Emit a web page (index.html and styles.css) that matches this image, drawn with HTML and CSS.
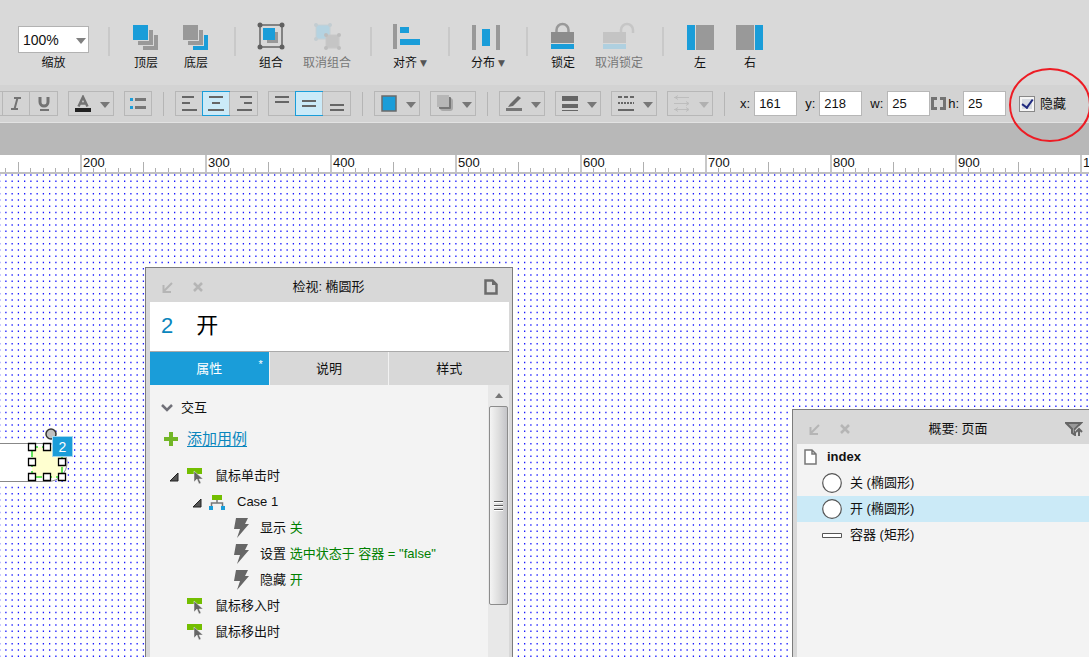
FILE: index.html
```html
<!DOCTYPE html>
<html lang="zh-CN">
<head>
<meta charset="utf-8">
<title>index</title>
<link rel="stylesheet" href="styles.css">
</head>
<body>
<div class="app">
  <header class="main-bar">
    <div class="zoom-group">
      <div class="select-wrap">
        <select id="zoom" class="zoom-select"><option>100%</option></select>
        <svg class="zoom-arrow" width="10" height="6" viewBox="0 0 10 6"><path d="M0 0h10L5 6z" fill="#808080"/></svg>
      </div>
      <label class="tool-label" for="zoom">缩放</label>
    </div>
    <i class="divider"></i>
    <div class="tool-group">
      <button class="tool"><svg width="28" height="27" viewBox="0 0 28 27"><path d="M6 21v-4h11V6h4v15zM11 26v-4h11V11h4v15z" fill="#999"/><path d="M1 1h15v15H1z" fill="#1a9dd9"/></svg><span>顶层</span></button>
      <button class="tool"><svg width="28" height="27" viewBox="0 0 28 27"><path d="M6 21v-4h11V6h4v15z" fill="#999"/><path d="M11 26v-4h11V11h4v15z" fill="#1a9dd9"/><path d="M1 1h15v15H1z" fill="#999"/></svg><span>底层</span></button>
    </div>
    <i class="divider"></i>
    <div class="tool-group wide">
      <button class="tool"><svg width="28" height="28" viewBox="0 0 28 28"><path d="M3 3h22v22H3z" fill="none" stroke="#666" stroke-width="1.500"/><path d="M10 10h11v11H10z" fill="#999"/><path d="M6 6h12v12H6z" fill="#1a9dd9"/><g fill="#606060"><circle cx="3" cy="3" r="2.500"/><circle cx="25" cy="3" r="2.500"/><circle cx="3" cy="25" r="2.500"/><circle cx="25" cy="25" r="2.500"/></g></svg><span>组合</span></button>
      <button class="tool" disabled><svg width="28" height="28" viewBox="0 0 28 28"><path d="M3 3h14v14H3z" fill="#b5d3e1" stroke="#c6d0d4"/><path d="M13 13h13v13H13z" fill="#c5c5c5" stroke="#c8c8c8"/><g fill="#c3cdd1"><circle cx="3" cy="3" r="2"/><circle cx="17" cy="3" r="2"/><circle cx="3" cy="17" r="2"/></g><g fill="#bdbdbd"><circle cx="13" cy="13" r="2"/><circle cx="26" cy="13" r="2"/><circle cx="13" cy="26" r="2"/><circle cx="26" cy="26" r="2"/></g></svg><span>取消组合</span></button>
    </div>
    <i class="divider"></i>
    <div class="tool-group single">
      <button class="tool"><svg width="34" height="28" viewBox="0 0 34 28"><path d="M0 1h4v25H0z" fill="#999"/><path d="M7 4h9v6H7zM7 16h20v6H7z" fill="#1a9dd9"/></svg><span>对齐<b class="caret">▼</b></span></button>
    </div>
    <i class="divider"></i>
    <div class="tool-group single">
      <button class="tool"><svg width="32" height="28" viewBox="0 0 32 28"><path d="M0 2h4v25H0zM24 2h4v25h-4z" fill="#999"/><path d="M10 6h8v17h-8z" fill="#1a9dd9"/></svg><span>分布<b class="caret">▼</b></span></button>
    </div>
    <i class="divider"></i>
    <div class="tool-group wide">
      <button class="tool"><svg width="26" height="28" viewBox="0 0 26 28"><path d="M6.500 11V8a6 6 0 0 1 12 0v3" fill="none" stroke="#999" stroke-width="2.500"/><path d="M1 10h23v11H1z" fill="#8c8c8c"/><path d="M1 22h23v5H1z" fill="#1a9dd9"/></svg><span>锁定</span></button>
      <button class="tool" disabled><svg width="32" height="28" viewBox="0 0 32 28"><path d="M18 11V8a6 6 0 0 1 12 0v3" fill="none" stroke="#c6c6c6" stroke-width="2.500"/><path d="M0 10h23v11H0z" fill="#c4c4c4"/><path d="M0 22h23v5H0z" fill="#afd0e0"/></svg><span>取消锁定</span></button>
    </div>
    <i class="divider"></i>
    <div class="tool-group">
      <button class="tool"><svg width="28" height="27" viewBox="0 0 28 27"><path d="M1 1h8v25H1z" fill="#1a9dd9"/><path d="M10 1h18v25H10z" fill="#999"/></svg><span>左</span></button>
      <button class="tool"><svg width="28" height="27" viewBox="0 0 28 27"><path d="M0 1h18v25H0z" fill="#999"/><path d="M19 1h8v25h-8z" fill="#1a9dd9"/></svg><span>右</span></button>
    </div>
  </header>

  <div class="format-bar">
    <div class="segment text-style">
      <button aria-label="粗体"></button>
      <button aria-label="斜体"><svg width="16" height="17" viewBox="0 0 16 17"><path d="M6 3h7M3 14h7M9.500 3L6.500 14" fill="none" stroke="#737373" stroke-width="2"/></svg></button>
      <button aria-label="下划线"><svg width="16" height="17" viewBox="0 0 16 17"><path d="M4 2v5a4 4 0 0 0 8 0V2" fill="none" stroke="#737373" stroke-width="3"/><path d="M4 14h9v2H4z" fill="#737373"/></svg></button>
    </div>
    <button class="drop" aria-label="文字颜色"><svg width="16" height="17" viewBox="0 0 16 17"><path d="M3.500 11.500L8 2l4.500 9.500M5 8.500h6" fill="none" stroke="#737373" stroke-width="2.500"/><path d="M0 13h16v4H0z" fill="#222"/></svg><svg class="arrow" viewBox="0 0 10 6"><path d="M0 0h10L5 6z"/></svg></button>
    <button class="square" aria-label="项目符号"><svg width="16" height="11" viewBox="0 0 16 11"><path d="M0 0h3v3H0zM0 8h3v3H0z" fill="#1a9dd9"/><path d="M5 0h11v3H5zM5 8h11v3H5z" fill="#777"/></svg></button>
    <i class="bar-line"></i>
    <div class="segment">
      <button aria-label="左对齐"><svg width="16" height="17" viewBox="0 0 16 17"><path d="M1 1h12v2H1zM1 7h8v2H1zM1 14h15v2H1z" fill="#666"/></svg></button>
      <button aria-label="居中" aria-pressed="true"><svg width="16" height="17" viewBox="0 0 16 17"><path d="M1 1h14v2H1zM4 7h8v2H4zM0 14h16v2H0z" fill="#666"/></svg></button>
      <button aria-label="右对齐"><svg width="16" height="17" viewBox="0 0 16 17"><path d="M4 1h12v2H4zM8 7h8v2H8zM1 14h15v2H1z" fill="#666"/></svg></button>
    </div>
    <div class="segment">
      <button aria-label="顶部对齐"><svg width="14" height="17" viewBox="0 0 14 17"><path d="M0 1h14v2H0zM0 6h14v2H0z" fill="#666"/></svg></button>
      <button aria-label="中部对齐" aria-pressed="true"><svg width="14" height="17" viewBox="0 0 14 17"><path d="M0 5h14v2H0zM0 10h14v2H0z" fill="#666"/></svg></button>
      <button aria-label="底部对齐"><svg width="14" height="17" viewBox="0 0 14 17"><path d="M0 9h14v2H0zM0 14h14v2H0z" fill="#666"/></svg></button>
    </div>
    <i class="bar-line"></i>
    <button class="drop" aria-label="填充"><svg width="16" height="17" viewBox="0 0 16 17"><path d="M1 1h14v15H1z" fill="#1a9dd9" stroke="#6b6b6b" stroke-width="1.500"/></svg><svg class="arrow" viewBox="0 0 10 6"><path d="M0 0h10L5 6z"/></svg></button>
    <button class="drop" aria-label="阴影"><svg width="16" height="17" viewBox="0 0 16 17"><rect x="3" y="3" width="13" height="13" rx="3" fill="#aaa"/><rect x="2" y="2" width="12" height="12" rx="1" fill="#777"/><path d="M0 0h12v12H0z" fill="#b7b7b7"/></svg><svg class="arrow" viewBox="0 0 10 6"><path d="M0 0h10L5 6z"/></svg></button>
    <i class="bar-line"></i>
    <button class="drop" aria-label="线条颜色"><svg width="16" height="17" viewBox="0 0 16 17"><path d="M4 9l8-8 3 2-8 8-5 1z" fill="#6b6b6b"/><path d="M0 13h16v3H0z" fill="#777"/></svg><svg class="arrow" viewBox="0 0 10 6"><path d="M0 0h10L5 6z"/></svg></button>
    <button class="drop" aria-label="线宽"><svg width="16" height="17" viewBox="0 0 16 17"><path d="M0 1h16v5H0zM0 9h16v4H0zM0 15h16v1H0z" fill="#666"/></svg><svg class="arrow" viewBox="0 0 10 6"><path d="M0 0h10L5 6z"/></svg></button>
    <button class="drop" aria-label="线型"><svg width="16" height="17" viewBox="0 0 16 17"><path d="M0 2h16" stroke="#666" stroke-width="2" stroke-dasharray="4 2"/><path d="M0 8h16" stroke="#666" stroke-width="2" stroke-dasharray="2 1"/><path d="M0 15h16" stroke="#666" stroke-width="2"/></svg><svg class="arrow" viewBox="0 0 10 6"><path d="M0 0h10L5 6z"/></svg></button>
    <button class="drop" aria-label="箭头样式" disabled><svg width="16" height="17" viewBox="0 0 16 17"><path d="M0 2.500h15M0 8.500h15M0 14.500h15M4 .5l-3 2 3 2M12 6.500l3 2-3 2M4 12.500l-3 2 3 2M12 12.500l3 2-3 2" fill="none" stroke="#bdbdbd"/></svg><svg class="arrow" viewBox="0 0 10 6"><path d="M0 0h10L5 6z"/></svg></button>
    <i class="bar-line"></i>
    <div class="fields">
      <label class="field" for="fx">x:<input id="fx" value="161"></label>
      <label class="field" for="fy">y:<input id="fy" value="218"></label>
      <label class="field" for="fw">w:<input id="fw" value="25"></label>
      <div class="height-field">
        <svg width="15" height="13" viewBox="0 0 15 13"><path d="M6 1.500H1.500v10H6M9 1.500h4.500v10H9" fill="none" stroke="#737373" stroke-width="3"/></svg>
        <label class="field" for="fh">h:<input id="fh" value="25"></label>
      </div>
      <div class="hide-option">
        <input id="hide" type="checkbox" checked>
        <label for="hide">隐藏</label>
        <svg class="marker" width="84" height="76" viewBox="0 0 84 76"><ellipse cx="42" cy="38" rx="40" ry="36" fill="none" stroke="#ed1c24" stroke-width="2"/></svg>
      </div>
    </div>
  </div>

  <div class="tab-strip"></div>

  <div class="ruler">
    <svg class="ticks" width="100%" height="19"><defs><pattern id="tick" x="80" y="0" width="125" height="19" patternUnits="userSpaceOnUse"><path d="M0 0h2v19H0z" fill="#c8c8c8"/><path d="M63 7h1v12h-1zM13 13h1v6h-1zM25 13h1v6h-1zM38 13h1v6h-1zM50 13h1v6h-1zM75 13h1v6h-1zM88 13h1v6h-1zM100 13h1v6h-1zM113 13h1v6h-1z" fill="#b0b0b0"/></pattern></defs><rect width="100%" height="19" fill="url(#tick)"/></svg>
    <div class="numbers"><span>200</span><span>300</span><span>400</span><span>500</span><span>600</span><span>700</span><span>800</span><span>900</span><span>1000</span></div>
  </div>

  <main class="canvas">
    <svg class="dots" width="100%" height="100%"><defs>
      <pattern id="dot" x="-1" y="-6" width="25" height="25" patternUnits="userSpaceOnUse"><g fill="none" stroke="#1a1aff" stroke-width="1.300" stroke-dasharray="1.300 4.950">
        <path d="M0 .75h25M0 7h25M0 13.250h25M0 19.500h25"/></g></pattern></defs>
      <rect width="100%" height="100%" fill="url(#dot)"/></svg>

    <div class="widget">
      <svg width="76" height="60" viewBox="0 0 76 60">
        <path d="M0 16.500h48a19 19 0 0 1 0 38H0" fill="#fff" stroke="#888"/>
        <path d="M32 20h30c6 10 4 22-4 31H32z" fill="#ffffd0"/>
        <path d="M32 20h30v30H32z" fill="none" stroke="#33dd33" stroke-width="1.500" stroke-dasharray="6 4"/>
        <circle cx="51" cy="7" r="5" fill="#c0c0c0" stroke="#333" stroke-width="1.500"/>
        <g fill="#fff" stroke="#000" stroke-width="1.300"><path d="M28.500 16.500h7v7h-7zM43.500 16.500h7v7h-7zM28.500 31.500h7v7h-7zM58.500 31.500h7v7h-7zM28.500 46.500h7v7h-7zM43.500 46.500h7v7h-7zM58.500 46.500h7v7h-7z"/></g>
      </svg>
      <span class="badge">2</span>
    </div>

    <section class="panel inspector">
      <div class="panel-head">
        <svg width="11" height="11" viewBox="0 0 11 11"><path d="M10 1L2 9M1.500 3v7H9" fill="none" stroke="#b5b5b5" stroke-width="2"/></svg>
        <svg width="10" height="10" viewBox="0 0 10 10"><path d="M1 1l8 8M9 1L1 9" fill="none" stroke="#b5b5b5" stroke-width="2.500"/></svg>
        <h2>检视: 椭圆形</h2>
        <svg class="head-end" width="14" height="16" viewBox="0 0 14 16"><path d="M1.500 1.500h7l4 4v9h-11z" fill="none" stroke="#6b6b6b" stroke-width="2.500"/><path d="M8 1v5h5z" fill="#6b6b6b"/></svg>
      </div>
      <div class="name-row"><span class="number">2</span><span>开</span></div>
      <div class="tabs">
        <button class="active">属性<sup>*</sup></button><button>说明</button><button>样式</button>
      </div>
      <div class="panel-body">
        <div class="content">
          <div class="section"><svg width="12" height="8" viewBox="0 0 12 8"><path d="M1 1l5 5 5-5" fill="none" stroke="#707078" stroke-width="2.500"/></svg>交互</div>
          <div class="add"><svg width="14" height="14" viewBox="0 0 14 14"><path d="M7 0v14M0 7h14" stroke="#72b626" stroke-width="4"/></svg><a href="#add">添加用例</a></div>
          <ul class="tree">
            <li class="event"><svg class="open" width="10" height="10" viewBox="0 0 10 10"><path d="M9 1v8H1z" fill="#555" stroke="#222"/></svg><svg width="17" height="16" viewBox="0 0 17 16"><path d="M0 0h15v6H0z" fill="#73be00"/><path d="M7 3v11l3-3 2 5 2-1-2-4h4z" fill="#666" stroke="#f3f3f3" stroke-width=".5"/></svg><span>鼠标单击时</span></li>
            <li class="case"><svg class="open" width="10" height="10" viewBox="0 0 10 10"><path d="M9 1v8H1z" fill="#555" stroke="#222"/></svg><svg width="16" height="15" viewBox="0 0 16 15"><path d="M3 0h10v5H3z" fill="#73be00"/><path d="M8 5v3M2.500 12V8h11v4" fill="none" stroke="#777" stroke-width="1.500"/><path d="M0 11h4v4H0zM12 11h4v4h-4z" fill="#1a9dd9"/></svg><span>Case 1</span></li>
            <li class="action"><svg width="16" height="20" viewBox="0 0 16 20"><path d="M2 0h12l-3 6h4L3 20l3-9H0z" fill="#666"/></svg><span>显示 <em>关</em></span></li>
            <li class="action"><svg width="16" height="20" viewBox="0 0 16 20"><path d="M2 0h12l-3 6h4L3 20l3-9H0z" fill="#666"/></svg><span>设置 <em>选中状态于 容器 = "false"</em></span></li>
            <li class="action"><svg width="16" height="20" viewBox="0 0 16 20"><path d="M2 0h12l-3 6h4L3 20l3-9H0z" fill="#666"/></svg><span>隐藏 <em>开</em></span></li>
            <li class="event closed"><svg width="17" height="16" viewBox="0 0 17 16"><path d="M0 0h15v6H0z" fill="#73be00"/><path d="M7 3v11l3-3 2 5 2-1-2-4h4z" fill="#666" stroke="#f3f3f3" stroke-width=".5"/></svg><span>鼠标移入时</span></li>
            <li class="event closed"><svg width="17" height="16" viewBox="0 0 17 16"><path d="M0 0h15v6H0z" fill="#73be00"/><path d="M7 3v11l3-3 2 5 2-1-2-4h4z" fill="#666" stroke="#f3f3f3" stroke-width=".5"/></svg><span>鼠标移出时</span></li>
          </ul>
        </div>
        <div class="scroll">
          <svg width="8" height="5" viewBox="0 0 8 5"><path d="M0 5l4-5 4 5z" fill="#777"/></svg>
          <div class="thumb"><svg width="9" height="11" viewBox="0 0 9 11"><path d="M0 1.500h9M0 5.500h9M0 9.500h9" stroke="#555"/><path d="M0 2.500h9M0 6.500h9M0 10.500h9" stroke="#fff"/></svg></div>
        </div>
      </div>
    </section>

    <section class="panel outline">
      <div class="panel-head">
        <svg width="11" height="11" viewBox="0 0 11 11"><path d="M10 1L2 9M1.500 3v7H9" fill="none" stroke="#b5b5b5" stroke-width="2"/></svg>
        <svg width="10" height="10" viewBox="0 0 10 10"><path d="M1 1l8 8M9 1L1 9" fill="none" stroke="#b5b5b5" stroke-width="2.500"/></svg>
        <h2>概要: 页面</h2>
        <svg class="head-end" width="18" height="14" viewBox="0 0 18 14"><path d="M1 1h15l-6 6v6l-3-2V7z" fill="#999" stroke="#666" stroke-width="2"/><path d="M14 14V7M11 10l3-3 3 3" fill="none" stroke="#d8d8d8" stroke-width="4"/><path d="M14 14V7M11 10l3-3 3 3" fill="none" stroke="#666" stroke-width="2"/></svg>
      </div>
      <ul class="items">
        <li class="root"><svg width="13" height="16" viewBox="0 0 13 16"><path d="M1 1h7l4 4v10H1zM8 1v4h4" fill="#fff" stroke="#777" stroke-width="1.500"/></svg><strong>index</strong></li>
        <li><svg width="20" height="20" viewBox="0 0 20 20"><circle cx="10" cy="10" r="9.300" fill="#fff" stroke="#555" stroke-width="1.200"/></svg>关 (椭圆形)</li>
        <li class="selected"><svg width="20" height="20" viewBox="0 0 20 20"><circle cx="10" cy="10" r="9.300" fill="#fff" stroke="#555" stroke-width="1.200"/></svg>开 (椭圆形)</li>
        <li><svg width="20" height="20" viewBox="0 0 20 20"><path d="M.5 8.500h19v4H.5z" fill="#fff" stroke="#555"/></svg>容器 (矩形)</li>
      </ul>
    </section>
  </main>
</div>
</body>
</html>
```
FILE: styles.css
```css
* { box-sizing: border-box; }
body { margin: 0; font: 13px/20px "Liberation Sans", "Noto Sans CJK SC", sans-serif; color: #111; }
button, input, select { font: inherit; color: inherit; margin: 0; }
button { padding: 0; border: 0; background: none; }
svg { display: block; flex: none; }
ul { list-style: none; margin: 0; padding: 0; }
.app { display: flex; flex-direction: column; height: 100vh; overflow: hidden; }

.main-bar { display: flex; flex: none; height: 85px; background: #d9d9d9; }
.divider { flex: none; width: 2px; height: 29px; margin-top: 27px; background: #c9c9c9; }
.zoom-group { flex: none; width: 108px; padding: 26px 0 0 18px; }
.select-wrap { position: relative; width: 71px; }
.zoom-select { display: block; width: 100%; height: 27px; padding: 0 4px; border: 1px solid #b2b2b2; border-radius: 0; background: #fff; appearance: none; font-size: 14px; }
.zoom-arrow { position: absolute; right: 3px; top: 12px; }
.tool-label { display: block; width: 71px; text-align: center; font-size: 12px; line-height: 20px; }
.tool-group { display: flex; flex: none; width: 124px; padding: 24px 12px 0 11px; }
.tool-group.wide { width: 134px; padding: 22px 0 0 7px; }
.tool-group.single { width: 76px; padding: 23px 0 0; justify-content: center; }
.tool { display: flex; flex-direction: column; align-items: center; justify-content: space-between; width: 50px; height: 49px; font-size: 12px; line-height: 20px; white-space: nowrap; }
.wide .tool { width: 56px; height: 51px; }
.single .tool { height: 50px; }
.tool:disabled { color: #777; }
.caret { margin-left: 3px; color: #555; font: 9px/12px "DejaVu Sans", sans-serif; vertical-align: 1px; }

.format-bar { display: flex; flex: none; align-items: center; gap: 10px; height: 38px; background: #d3d3d3; border-bottom: 1px solid #e2e2e2; }
.segment { display: flex; flex: none; width: 83px; height: 25px; border: 1px solid #b7b7b7; }
.text-style { width: 84px; margin-left: -26px; }
.segment button { flex: 1; display: flex; align-items: center; justify-content: center; }
.segment button + button { border-left: 1px solid #b7b7b7; }
.segment button[aria-pressed="true"] { margin: -1px; border: 1px solid #1a9dd9; background: #cbeaf8; }
.square, .drop { display: flex; flex: none; align-items: center; justify-content: center; width: 28px; height: 25px; border: 1px solid #b7b7b7; }
.drop { justify-content: space-between; width: 46px; padding: 0 3px 0 6px; }
.arrow { width: 10px; height: 6px; margin-top: 2px; fill: #777; }
.drop:disabled .arrow { fill: #b0b0b0; }
.bar-line { flex: none; width: 1px; height: 24px; margin: 0 1px; background: #b5b5b5; }
.fields { display: flex; align-items: center; gap: 8px; margin-left: 4px; }
.field { display: flex; align-items: center; gap: 4px; }
.field input { width: 43px; height: 25px; padding: 0 4px; border: 1px solid #b7b7b7; background: #fff; }
.height-field { display: flex; align-items: center; gap: 2px; margin-left: -7px; }
.hide-option { position: relative; display: flex; align-items: center; gap: 5px; margin-left: 5px; white-space: nowrap; }
.hide-option input { display: grid; place-items: center; appearance: none; width: 16px; height: 16px; border: 1px solid #888; background: #d8dce2; box-shadow: inset 0 0 0 2px #f5f5f5; }
.hide-option input::before { content: ""; width: 5px; height: 9px; margin-bottom: 2px; border: solid #1f2a80; border-width: 0 2px 2px 0; transform: rotate(36deg); }
.marker { position: absolute; left: -11px; top: -27px; pointer-events: none; }
.tab-strip { flex: none; height: 32px; background: #b8b8b8; }

.ruler { position: relative; flex: none; height: 19px; overflow: hidden; background: #fff; border-bottom: 2px solid #c0c0c0; }
.ticks { position: absolute; inset: 0; }
.numbers { position: relative; display: flex; padding-left: 83px; line-height: 16px; }
.numbers span { flex: none; width: 125px; }

.canvas { position: relative; flex: 1; overflow: hidden; background: #fff; }
.dots { position: absolute; inset: 0; }
.widget { position: absolute; left: 0; top: 253px; }
.badge { position: absolute; left: 52px; top: 9px; width: 21px; height: 21px; border: 1px solid #a5d8ee; background: #1a9dd9; color: #fff; text-align: center; font-size: 14px; line-height: 20px; }
.panel { position: absolute; bottom: 0; display: flex; flex-direction: column; border: 1px solid #7c7c7c; border-bottom: 0; background: #d8d8d8; padding: 0 3px 0 4px; }
.inspector { left: 145px; top: 93px; width: 368px; }
.outline { left: 792px; top: 235px; width: 333px; }
.panel-head { position: relative; display: flex; flex: none; align-items: center; gap: 20px; height: 34px; padding: 4px 0 0 12px; }
.panel-head h2 { position: absolute; inset: 4px 2px 0 0; margin: 0; text-align: center; font-size: 13px; font-weight: 400; line-height: 30px; }
.head-end { margin-left: auto; margin-right: 11px; }
.outline .head-end { margin-right: 38px; }
.name-row { display: flex; flex: none; align-items: center; gap: 23px; height: 50px; padding: 0 0 2px 11px; background: #fff; border-bottom: 1px solid #aaa; color: #000; font-size: 22px; line-height: 32px; }
.number { color: #0a86bd; }
.tabs { display: grid; flex: none; grid-template-columns: 1fr 1fr 1fr; height: 33px; }
.tabs button { position: relative; border-right: 1px solid #f2f2f2; }
.tabs button:last-child { border: 0; }
.tabs .active { background: #1a9dd9; color: #fff; }
.tabs sup { position: absolute; right: 6px; top: 4px; line-height: 16px; }
.panel-body { display: flex; flex: 1; min-height: 0; overflow: hidden; background: #f3f3f3; }
.content { flex: 1; padding: 13px 0 0 11px; white-space: nowrap; }
.section { display: flex; align-items: center; gap: 8px; height: 20px; }
.add { display: flex; align-items: center; gap: 9px; height: 20px; margin: 11px 0 14px 3px; font-size: 15px; }
.add a { color: #0a86bd; text-underline-offset: 2px; }
.tree li { display: flex; align-items: center; height: 26px; }
.tree em { font-style: normal; color: #008000; }
.event { gap: 11px; padding-left: 8px; }
.event.closed { padding-left: 26px; }
.event .open { margin-right: -3px; margin-top: 2px; }
.case { gap: 12px; padding-left: 31px; }
.case .open { margin-right: -5px; margin-top: 2px; }
.action { gap: 10px; padding-left: 73px; }
.scroll { display: flex; flex: none; flex-direction: column; align-items: center; gap: 8px; width: 21px; padding-top: 8px; background: #e8e8e8; }
.thumb { display: grid; flex: none; place-items: center; width: 19px; height: 199px; border: 1px solid #8c8c8c; border-radius: 2px; background: linear-gradient(90deg, #f4f4f4, #dedede 50%, #c4c4c8); }
.items { flex: 1; background: #f3f3f3; white-space: nowrap; }
.items li { display: flex; align-items: center; gap: 8px; height: 26px; padding-left: 25px; }
.items .root { gap: 10px; padding-left: 7px; }
.items .selected { background: #cbeaf7; }
.outline .items { margin-right: -3px; }
```
